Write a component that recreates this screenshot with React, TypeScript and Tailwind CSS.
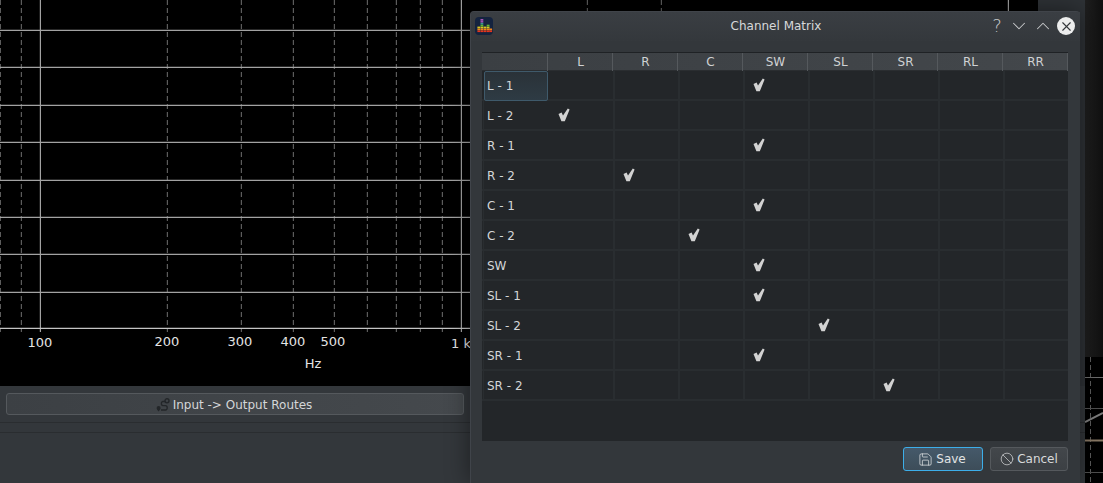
import React from "react";
import { Ban, ChevronDown, ChevronUp, Save, X } from "lucide-react";

const COLUMNS = ["L", "R", "C", "SW", "SL", "SR", "RL", "RR"];

// each row: label + index of the checked column
const ROWS: { label: string; checked: number[] }[] = [
  { label: "L - 1", checked: [3] },
  { label: "L - 2", checked: [0] },
  { label: "R - 1", checked: [3] },
  { label: "R - 2", checked: [1] },
  { label: "C - 1", checked: [3] },
  { label: "C - 2", checked: [2] },
  { label: "SW", checked: [3] },
  { label: "SL - 1", checked: [3] },
  { label: "SL - 2", checked: [4] },
  { label: "SR - 1", checked: [3] },
  { label: "SR - 2", checked: [5] },
];

const H_LINES = [30.4, 67.4, 105.4, 142.4, 180.4, 217.4, 254.4, 292.4];
const DASHED_X = [0, 21, 167, 241, 293, 334, 367, 396, 420, 442, 587, 661];
const SOLID_X = [40.4, 461.4, 1008.4];
const X_LABELS = [
  { x: 40, y: 347, text: "100" },
  { x: 167, y: 346, text: "200" },
  { x: 240, y: 346, text: "300" },
  { x: 293, y: 346, text: "400" },
  { x: 333, y: 346, text: "500" },
  { x: 461, y: 348, text: "1 k" },
];

function SpectrumPlot() {
  return (
    <svg width="1038" height="386" className="block bg-black">
      {DASHED_X.map((x) => (
        <line key={x} x1={x + 0.4} x2={x + 0.4} y1="0" y2="332" stroke="#5c5c5c" strokeWidth="1.2" strokeDasharray="5 3" />
      ))}
      {H_LINES.map((y) => (
        <line key={y} x1="0" x2="1038" y1={y} y2={y} stroke="#a2a2a2" strokeWidth="1.2" />
      ))}
      {SOLID_X.map((x) => (
        <line key={x} x1={x} x2={x} y1="0" y2="332" stroke="#a2a2a2" strokeWidth="1.2" />
      ))}
      <line x1="0" x2="1038" y1="328.4" y2="328.4" stroke="#c4c4c4" strokeWidth="1.3" />
      <g fill="#e4e4e4" fontSize="13" fontFamily="'DejaVu Sans', sans-serif" textAnchor="middle">
        {X_LABELS.map((l) => (
          <text key={l.text} x={l.x} y={l.y}>
            {l.text}
          </text>
        ))}
        <text x="313" y="368">
          Hz
        </text>
      </g>
    </svg>
  );
}

function SidePlot() {
  return (
    <svg width="18" height="126" className="block bg-black">
      <line x1="5.5" x2="5.5" y1="0" y2="126" stroke="#5c5c5c" strokeDasharray="5 3" />
      <line x1="0" x2="18" y1="20.5" y2="20.5" stroke="#6c6c6c" />
      <line x1="0" x2="18" y1="51.5" y2="51.5" stroke="#505050" />
      <line x1="0" x2="18" y1="83.5" y2="83.5" stroke="#8a7a66" strokeWidth="2" />
      <line x1="0" x2="18" y1="115.5" y2="115.5" stroke="#505050" />
      <line x1="0" x2="18" y1="65" y2="56" stroke="#7e7e7e" strokeWidth="2" />
    </svg>
  );
}

function AppIcon() {
  const bars = [
    { x: 2.4, rows: 3 },
    { x: 5.5, rows: 7 },
    { x: 8.6, rows: 3 },
    { x: 11.7, rows: 4 },
    { x: 14.3, rows: 2 },
  ];
  const colors = ["#e8341c", "#f0851a", "#d9c820", "#62b832", "#3a9a8c", "#9a4fb0", "#a855b8"];
  return (
    <svg width="18" height="18" className="block">
      <rect x="0" y="0" width="18" height="18" rx="4" fill="#14233f" />
      {bars.map((b) =>
        Array.from({ length: b.rows }).map((_, i) => (
          <rect key={`${b.x}-${i}`} x={b.x} y={13.4 - i * 1.9} width="2.8" height="1.7" fill={colors[i]} />
        ))
      )}
    </svg>
  );
}

// heavy slanted tick used in the matrix cells
function CheckMark() {
  return (
    <svg width="12" height="14" viewBox="0 0 12 14" className="block">
      <path d="M0.5 6 L3.6 4.6 L5 7.6 L9.8 0.6 L11.6 1.4 L6.8 13.2 L3.4 13.2 Z" fill="#d2d2d2" />
    </svg>
  );
}

// pin bottom-left, ring top-right, joined by an s-curve
function RouteIcon() {
  return (
    <svg width="14" height="14" viewBox="0 0 14 14" fill="none" className="block text-[#232629]">
      <circle cx="11" cy="2.8" r="2" stroke="currentColor" strokeWidth="1.4" />
      <path d="M9.2 3.5 H7 C4.8 3.5 4.8 7.6 7 7.6 H9.5 C11.8 7.6 11.8 12 9.5 12 H5" stroke="currentColor" strokeWidth="1.3" />
      <path d="M2.6 13.6 C1.4 12 0.6 11 0.6 9.9 a2 2 0 0 1 4 0 C4.6 11 3.8 12 2.6 13.6 Z" fill="currentColor" />
    </svg>
  );
}

function ChannelMatrixDialog() {
  return (
    <div className="absolute left-[470px] top-[11px] w-[610px] h-[472px] flex flex-col rounded-t-[4px] bg-[#33373b] border-t border-l border-[#40444a] shadow-[0_0_24px_rgba(0,0,0,0.45)]">
      <div className="relative h-[29px] shrink-0 flex items-center justify-between pl-[4px] pr-[5px] pb-[1px] bg-gradient-to-b from-[#3a3e43] to-[#34383c]">
        <AppIcon />
        <div className="absolute inset-x-0 top-[5px] text-center text-[12px] text-[#d6d8da] pl-[1px]">Channel Matrix</div>
        <div className="flex items-center text-[#c8cacc]">
          <span className="w-[20px] text-center text-[18px] leading-none font-light">?</span>
          <ChevronDown size={22} strokeWidth={1.1} className="ml-[1px]" />
          <ChevronUp size={22} strokeWidth={1.1} className="ml-[2px]" />
          <span className="ml-[3px] w-[18px] h-[18px] rounded-full bg-[#eceded] flex items-center justify-center">
            <X size={15} strokeWidth={1.8} className="text-[#33373b]" />
          </span>
        </div>
      </div>

      <div className="flex-1 flex flex-col px-[11px] pt-[11px]">
        <div className="w-[586px] h-[389px] bg-[#232629] border-t border-[#1f2225]">
          <div className="grid grid-cols-[66px_repeat(7,65px)_65px] h-[18px] bg-gradient-to-r from-[#3b3f43] to-[#43474b] border-b border-[#2a2d30]">
            <div className="border-r border-[#55595d]" />
            {COLUMNS.map((c) => (
              <div key={c} className="border-r border-[#55595d] text-center text-[12px] leading-[18px] pl-[1px] text-[#d0d2d4]">
                {c}
              </div>
            ))}
          </div>
          {ROWS.map((row, r) => (
            <div key={row.label} className="grid grid-cols-[66px_repeat(7,65px)_64px] h-[30px] border-b-2 border-[#292d30]">
              <div
                className={
                  r === 0
                    ? "ml-[2px] rounded-[2px] border border-[#3f5a6b] bg-gradient-to-b from-[#2a3238] to-[#2e3b44] text-[12px] leading-[28px] pl-[2px] text-[#d4d6d8]"
                    : "ml-[1px] border-l border-[#292d30] text-[12px] leading-[30px] pl-[3px] text-[#d4d6d8]"
                }
              >
                {row.label}
              </div>
              {COLUMNS.map((c, i) => (
                <div key={c} className={i === 0 ? "pl-[10px] pt-[7px]" : "border-l-2 border-[#292d30] pl-[8px] pt-[7px]"}>
                  {row.checked.includes(i) ? <CheckMark /> : null}
                </div>
              ))}
            </div>
          ))}
        </div>

        <div className="flex justify-end gap-[7px] mt-[6px] mr-[1px]">
          <button className="w-[80px] h-[24px] flex items-center justify-center gap-[3px] pr-[2px] rounded-[3px] border border-[#3daee9] bg-gradient-to-b from-[#45596a] to-[#3d4d59] text-[12px] text-[#e2e4e5]">
            <Save size={15} strokeWidth={1.2} />
            Save
          </button>
          <button className="w-[78px] h-[24px] flex items-center justify-center gap-[3px] rounded-[3px] border border-[#55595d] bg-gradient-to-b from-[#43474b] to-[#3c4044] text-[12px] text-[#d8dadb]">
            <Ban size={14} strokeWidth={1.2} />
            Cancel
          </button>
        </div>
      </div>
    </div>
  );
}

export default function App() {
  return (
    <div className="relative w-[1103px] h-[483px] overflow-hidden flex bg-[#33373b] font-['DejaVu_Sans',sans-serif]">
      <div className="w-[1085px] flex flex-col">
        <div className="flex h-[386px]">
          <SpectrumPlot />
          <div className="flex-1 bg-[#2e3236]" />
        </div>
        <div className="flex-1 flex flex-col">
          <div className="px-[6px] pt-[7px]">
            <button className="w-[458px] h-[22px] flex items-center justify-center gap-[3px] pt-[1px] pr-[2px] rounded-[3px] border border-[#55595d] bg-gradient-to-r from-[#3c4044] to-[#45494d] text-[12px] text-[#d4d6d8]">
              <RouteIcon />
              Input -&gt; Output Routes
            </button>
          </div>
          <div className="mt-[7px] h-[11px] border-y border-[#2a2d30]" />
        </div>
      </div>
      <div className="flex-1 flex flex-col">
        <div className="h-[357px] bg-gradient-to-r from-[#1f1f1f] to-[#101010]" />
        <SidePlot />
      </div>
      <ChannelMatrixDialog />
    </div>
  );
}
